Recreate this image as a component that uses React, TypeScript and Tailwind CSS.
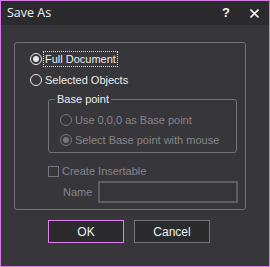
import React from 'react';

function Radio({ checked, disabled }: { checked?: boolean; disabled?: boolean }) {
  const ring = disabled ? 'border-[#77767b]' : 'border-[#e8e8e8]';
  const dot = disabled ? 'bg-[#77767b]' : 'bg-[#e8e8e8]';
  return (
    <span className={`flex h-[12px] w-[12px] shrink-0 items-center justify-center rounded-full border ${ring}`}>
      {checked && <span className={`h-[6px] w-[6px] rounded-full ${dot}`} />}
    </span>
  );
}

export default function App() {
  return (
    <div
      className="flex h-[267px] w-[270px] flex-col border border-[#d47ee4] bg-[#37363b] text-[11px] text-[#ececec]"
      style={{ fontFamily: '"Liberation Sans", Arial, sans-serif' }}
    >
      {/* Title bar */}
      <div className="flex h-[24px] shrink-0 items-center bg-[#2b2b2e] pl-[6px] pr-[10px]">
        <span className="text-[12.5px] text-[#f2f2f2]" style={{ fontFamily: '"Open Sans", sans-serif' }}>
          Save As
        </span>
        <span className="ml-auto text-[13px] font-bold text-[#f2f2f2]">?</span>
        <svg className="ml-[20px]" width="9" height="9" viewBox="0 0 9 9">
          <path d="M0.5 0.5 L8.5 8.5 M8.5 0.5 L0.5 8.5" stroke="#f2f2f2" strokeWidth="1.6" />
        </svg>
      </div>

      {/* Body */}
      <div className="pl-[13px] pt-[17px]">
        <div className="h-[168px] w-[232px] rounded-[3px] border border-[#737277]">
          <div className="ml-[15px] mt-[8px] flex h-[16px] items-center">
            <Radio checked />
            <span className="ml-[1px] border border-dotted border-[#e8e8e8] px-[1px] leading-[14px]">Full Document</span>
          </div>
          <div className="ml-[15px] mt-[5px] flex h-[16px] items-center gap-[3px]">
            <Radio />
            <span>Selected Objects</span>
          </div>

          <fieldset className="ml-[33px] mt-[4px] h-[61px] w-[189px] rounded-[3px] border border-[#737277]">
            <legend className="ml-[6px] px-[2px] leading-[14px]">Base point</legend>
            <div className="ml-[11px] mt-[6px] flex h-[16px] items-center gap-[3px] text-[#86858a]">
              <Radio disabled />
              <span>Use 0,0,0 as Base point</span>
            </div>
            <div className="ml-[11px] mt-[4px] flex h-[16px] items-center gap-[3px] text-[#86858a]">
              <Radio checked disabled />
              <span>Select Base point with mouse</span>
            </div>
          </fieldset>

          <div className="ml-[33px] mt-[10px] flex h-[16px] items-center gap-[3px] text-[#86858a]">
            <span className="h-[11px] w-[11px] border border-[#77767b]" />
            <span>Create Insertable</span>
          </div>
          <div className="mt-[2px] flex h-[22px] items-center text-[#86858a]">
            <span className="ml-[48px] w-[35px]">Name</span>
            <div className="h-[22px] w-[140px] border-2 border-[#5f5e63] bg-[#36353a]" />
          </div>
        </div>

        <div className="ml-[34px] mt-[10px] flex gap-[10px] text-[12px]">
          <button className="flex h-[23px] w-[76px] items-center justify-center border border-[#e083f0] bg-[#2b2b2e] text-[#f0f0f0]">
            OK
          </button>
          <button className="flex h-[23px] w-[76px] items-center justify-center border border-[#737277] bg-[#2b2b2e] text-[#f0f0f0]">
            Cancel
          </button>
        </div>
      </div>
    </div>
  );
}
